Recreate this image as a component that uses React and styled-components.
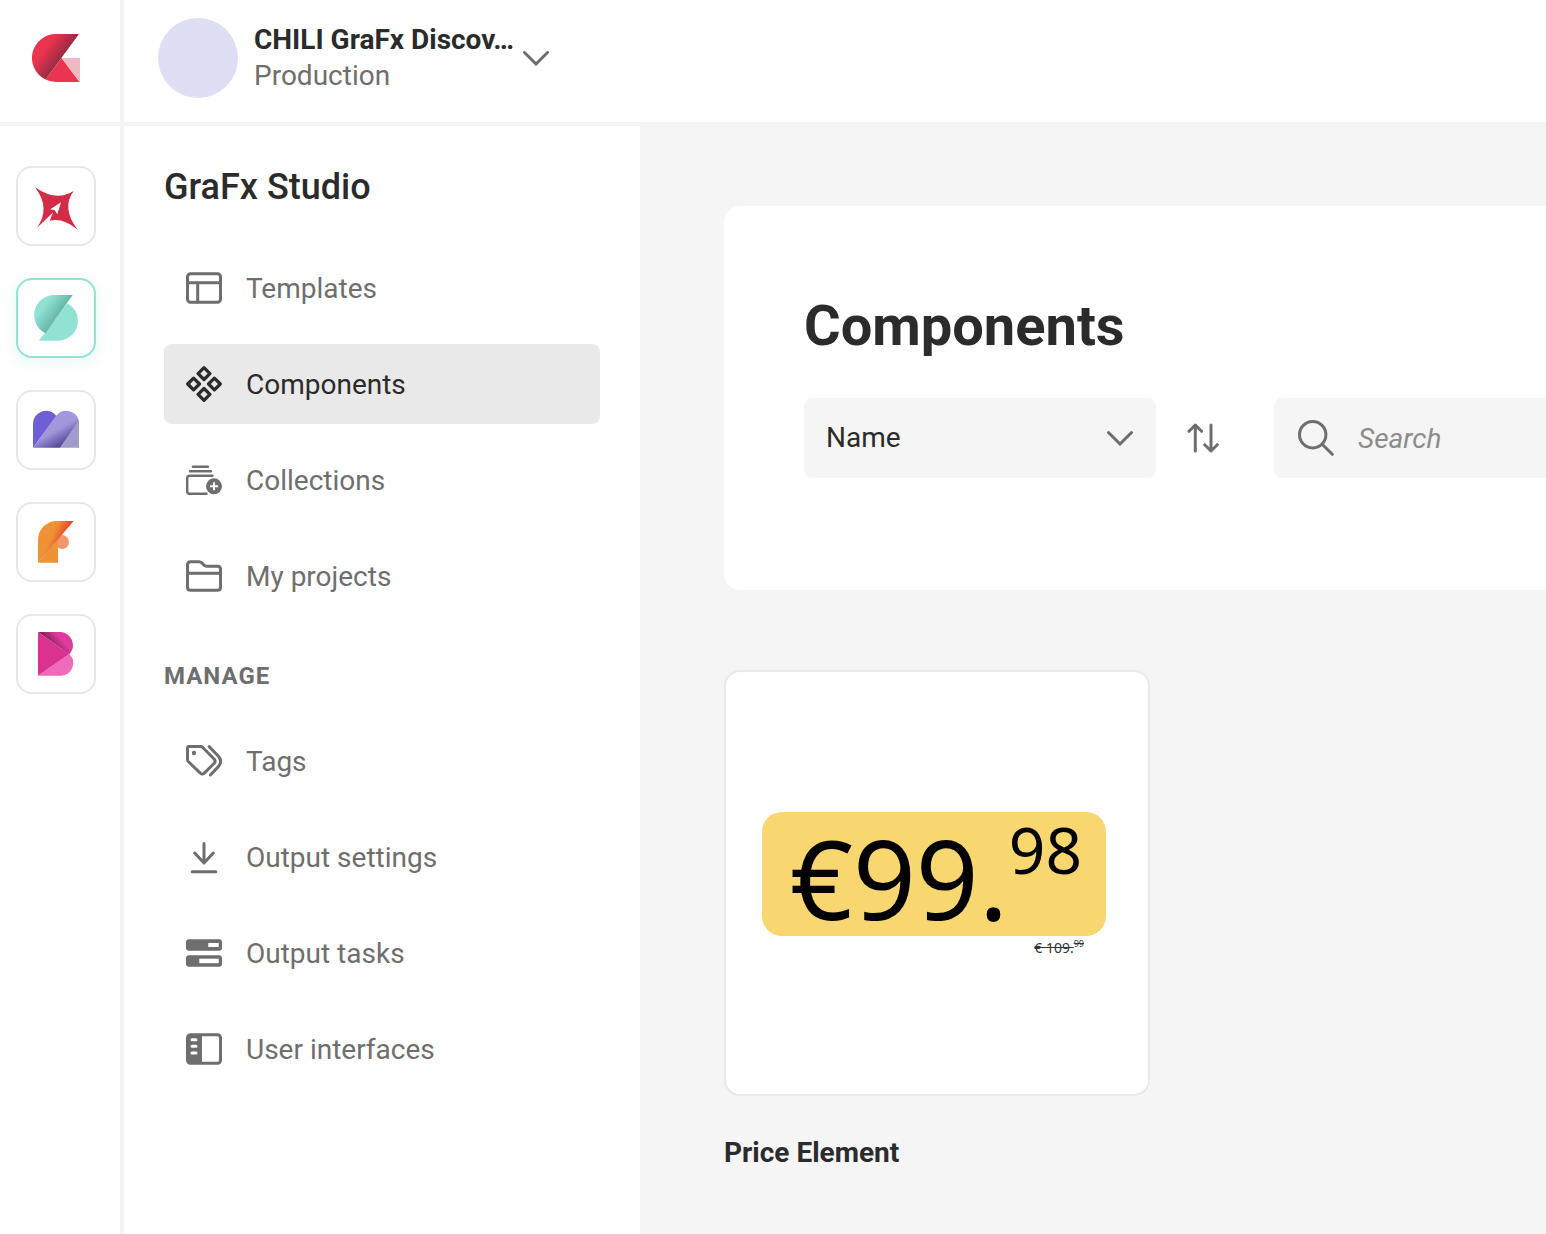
import React, { useState } from 'react';
import styled, { createGlobalStyle } from 'styled-components';

const GlobalStyle = createGlobalStyle`
  * {
    box-sizing: border-box;
  }

  body {
    margin: 0;
    background: #fff;
    color: #2b2b2b;
    font-family: Roboto, sans-serif;
    font-size: 28px;
    line-height: 36px;
    overflow-x: hidden;
  }

  button, input, select {
    font: inherit;
    color: inherit;
  }
`;

// Page frame
const Page = styled.div`
  display: grid;
  grid-template-columns: 124px minmax(0, 1fr);
  grid-template-rows: 126px 1fr;
  min-height: 100vh;
`;

const LogoCell = styled.a`
  display: flex;
  align-items: flex-start;
  padding: 34px 32px 0;
  border-right: 4px solid #f4f4f4;
  border-bottom: 4px solid #f4f4f4;
`;

const Header = styled.header`
  display: flex;
  align-items: flex-start;
  padding: 18px 34px;
  border-bottom: 4px solid #f4f4f4;
`;

const Rail = styled.nav`
  display: flex;
  flex-direction: column;
  gap: 32px;
  padding: 40px 16px;
  border-right: 4px solid #f4f4f4;
`;

const Body = styled.div`
  display: grid;
  grid-template-columns: 516px minmax(0, 1fr);
`;

// Header
const AccountButton = styled.button`
  display: flex;
  align-items: center;
  padding: 0;
  border: none;
  background: none;
  text-align: left;
  cursor: pointer;
`;

const Avatar = styled.span`
  width: 80px;
  height: 80px;
  margin-right: 16px;
  border-radius: 50%;
  background: #dedef5;
`;

const AccountText = styled.span`
  display: flex;
  flex-direction: column;
  margin-right: 9px;
`;

const AccountName = styled.span`
  font-weight: 700;
`;

const AccountType = styled.span`
  color: #6e6e6e;
`;

// Rail
const AppButton = styled.button`
  display: flex;
  align-items: center;
  justify-content: center;
  width: 80px;
  height: 80px;
  padding: 0;
  border: 2px solid ${(props) => (props.$active ? '#92e2d3' : '#e7e7e7')};
  border-radius: 16px;
  background: #fff;
  box-shadow: ${(props) => (props.$active ? '0 4px 16px rgba(146, 226, 211, 0.25)' : 'none')};
  cursor: pointer;
`;

// Side menu
const Sidebar = styled.aside`
  padding: 40px;
`;

const SidebarTitle = styled.h2`
  margin: 0 0 40px;
  font-size: 36px;
  font-weight: 500;
  line-height: 42px;
`;

const GroupTitle = styled.h3`
  margin: 40px 0 25px;
  color: #6e6e6e;
  font-size: 24px;
  font-weight: 700;
  line-height: 40px;
  letter-spacing: 1px;
`;

const MenuList = styled.ul`
  display: flex;
  flex-direction: column;
  gap: 16px;
  margin: 0;
  padding: 0;
  list-style: none;
`;

const MenuLink = styled.a`
  display: flex;
  align-items: center;
  gap: 24px;
  height: 80px;
  padding: 0 22px;
  border-radius: 8px;
  background: ${(props) => (props.$active ? '#e9e9e9' : 'transparent')};
  color: ${(props) => (props.$active ? '#2b2b2b' : '#6e6e6e')};
  text-decoration: none;
`;

const MenuLabel = styled.span`
  padding-top: 2px;
`;

// Content
const Main = styled.main`
  padding: 80px 0 60px 84px;
  background: #f5f5f5;
`;

const Panel = styled.section`
  padding: 80px 0 112px 80px;
  border-radius: 16px 0 0 16px;
  background: #fff;
`;

const PanelTitle = styled.h1`
  margin: 0 0 32px;
  font-size: 56px;
  font-weight: 700;
  line-height: 80px;
`;

const Toolbar = styled.div`
  display: flex;
  align-items: center;
`;

const SelectBox = styled.div`
  position: relative;
  width: 352px;

  svg {
    position: absolute;
    top: 32px;
    right: 23px;
    pointer-events: none;
  }
`;

const Select = styled.select`
  display: block;
  width: 100%;
  height: 80px;
  padding: 0 22px;
  border: none;
  border-radius: 8px;
  background: #f5f5f5;
  appearance: none;
`;

const SortButton = styled.button`
  display: flex;
  align-items: center;
  justify-content: center;
  width: 94px;
  height: 80px;
  margin-right: 24px;
  padding: 0;
  border: none;
  background: none;
  cursor: pointer;
`;

const SearchBox = styled.label`
  display: flex;
  flex: 1;
  align-items: center;
  gap: 24px;
  min-width: 0;
  height: 80px;
  padding-left: 24px;
  border-radius: 8px 0 0 8px;
  background: #f5f5f5;
`;

const SearchInput = styled.input`
  flex: 1;
  min-width: 0;
  padding: 2px 0 0;
  border: none;
  outline: none;
  background: none;

  &::placeholder {
    color: #8c8c8c;
    font-style: italic;
    opacity: 1;
  }
`;

const Cards = styled.div`
  display: flex;
  flex-wrap: wrap;
  gap: 40px;
  margin-top: 80px;
`;

const Card = styled.article`
  width: 426px;
`;

const Thumbnail = styled.div`
  display: flex;
  flex-direction: column;
  justify-content: center;
  height: 426px;
  padding: 6px 42px 0 36px;
  border: 2px solid #e9e9e9;
  border-radius: 16px;
  background: #fff;
  color: #000;
  font-family: 'Noto Sans', sans-serif;
`;

const CardTitle = styled.h4`
  margin: 39px 0 0;
  font-size: 28px;
  font-weight: 700;
  line-height: 36px;
`;

const PriceTag = styled.div`
  display: flex;
  justify-content: space-between;
  height: 124px;
  padding: 0 24px 0 28px;
  border-radius: 20px;
  background: #f8d770;
`;

const PriceWhole = styled.span`
  font-size: 110px;
  line-height: 130px;
`;

const PriceCents = styled.span`
  font-size: 64px;
  line-height: 76px;
`;

const OldPrice = styled.del`
  display: flex;
  justify-content: flex-end;
  padding-right: 22px;
  color: #333;
  font-size: 14px;
  line-height: 24px;
`;

const OldCents = styled.span`
  font-size: 9px;
  line-height: 16px;
`;

const Icon = ({ children, size = 36 }) => (
  <svg
    width={size}
    height={size}
    viewBox={`0 0 ${size} ${size}`}
    fill="none"
    stroke="currentColor"
    strokeWidth="3"
    strokeLinecap="round"
    strokeLinejoin="round"
    aria-hidden="true"
  >
    {children}
  </svg>
);

const Chevron = () => (
  <svg width="26" height="16" viewBox="0 0 26 16" fill="none" stroke="#6e6e6e" strokeWidth="3" strokeLinecap="round" aria-hidden="true">
    <path d="M1.5 2.5 13 14 24.5 2.5" />
  </svg>
);

const Logo = () => (
  <svg width="48" height="48" viewBox="0 0 48 48" aria-hidden="true">
    <defs>
      <linearGradient id="logo" gradientUnits="userSpaceOnUse" x1="14" y1="14" x2="32" y2="27.3">
        <stop offset="0" stopColor="#eb344f" />
        <stop offset="1" stopColor="#86283f" />
      </linearGradient>
    </defs>
    <path d="M29.4 24H48V48Z" fill="#f0b8c3" />
    <path d="M29.4 24 47.5 48H24A24 24 0 0 1 13.5 45.6Z" fill="#eb344f" />
    <path d="M24 0H47L13.5 45.6A24 24 0 0 1 24 0Z" fill="url(#logo)" />
  </svg>
);

const apps = [
  {
    name: 'Publisher',
    art: (
      <>
        <path d="M3 5.3Q24 20 41.7 9Q29 26 45.7 47.7Q31 35.5 17.7 38.7L21 30.5L5 45.7Q19 26 3 5.3Z" fill="#d42c46" />
        <path d="M29 20.3 18.3 27.3 22.8 28.2 25.3 32.2Z" fill="#fff" />
      </>
    ),
  },
  {
    name: 'Studio',
    art: (
      <>
        <defs>
          <linearGradient id="studio" gradientUnits="userSpaceOnUse" x1="12" y1="11" x2="29" y2="23.5">
            <stop offset="0" stopColor="#92e2d3" />
            <stop offset="1" stopColor="#5cb09f" />
          </linearGradient>
        </defs>
        <path d="M7 46.7 35.3 9.3A20.2 20.2 0 0 1 46 27A20 20 0 0 1 26.5 46.7Z" fill="#92e2d3" />
        <path d="M40.7 1H22.5A20.2 20.2 0 0 0 13.4 39.3Z" fill="url(#studio)" />
      </>
    ),
  },
  {
    name: 'Media',
    art: (
      <>
        <defs>
          <linearGradient id="media" gradientUnits="userSpaceOnUse" x1="22" y1="25" x2="31" y2="41">
            <stop offset="0" stopColor="#a397dc" />
            <stop offset="1" stopColor="#463d8c" />
          </linearGradient>
        </defs>
        <path d="M1 41.7V18A13 13 0 0 1 24.4 10Z" fill="#6f5fd6" />
        <path d="M28 41.7 47 15V41.7Z" fill="#a19bcc" />
        <path d="M1 41.7 24 9.9A13 13 0 0 1 47 15L28 41.7Z" fill="url(#media)" />
      </>
    ),
  },
  {
    name: 'Fulfillment',
    art: (
      <>
        <defs>
          <linearGradient id="fulfil" gradientUnits="userSpaceOnUse" x1="22" y1="13" x2="35" y2="19">
            <stop offset="0" stopColor="#ef9135" />
            <stop offset="1" stopColor="#e63b28" />
          </linearGradient>
        </defs>
        <circle cx="30" cy="24" r="7" fill="#f2976b" />
        <path d="M6 44.7 26 21V44.7Z" fill="#ef9135" />
        <path d="M41.7 3H24.5A18.5 18.5 0 0 0 6 21.5V44.7Z" fill="url(#fulfil)" />
      </>
    ),
  },
  {
    name: 'Brand',
    art: (
      <>
        <defs>
          <linearGradient id="brand" gradientUnits="userSpaceOnUse" x1="17" y1="12" x2="25.5" y2="5">
            <stop offset="0" stopColor="#86205f" />
            <stop offset="1" stopColor="#de3b9c" />
          </linearGradient>
        </defs>
        <path d="M6 2H28.6A13.2 13.2 0 0 1 37.3 24.2Z" fill="url(#brand)" />
        <path d="M6 45.7 37.3 24A12.6 12.6 0 0 1 29.2 45.7Z" fill="#ee6bb9" />
        <path d="M6 2 37.3 24 6 45.7Z" fill="#d9338f" />
      </>
    ),
  },
];

const icons = {
  templates: (
    <Icon>
      <rect x="1.5" y="3.7" width="33" height="28.6" rx="3" />
      <path d="M2 12.7H34M11.7 13V32" />
    </Icon>
  ),
  components: (
    <Icon>
      <g strokeWidth="3.2">
        <path d="M18 1.7 23.9 7.6 18 13.5 12.1 7.6Z" />
        <path d="M18 22.5 23.9 28.4 18 34.3 12.1 28.4Z" />
        <path d="M7.6 12.1 13.5 18 7.6 23.9 1.7 18Z" />
        <path d="M28.4 12.1 34.3 18 28.4 23.9 22.5 18Z" />
      </g>
    </Icon>
  ),
  collections: (
    <Icon>
      <g strokeWidth="2.4">
        <path d="M7 4.7H22M4 9.3H25M26.5 13.8H3.5Q1.2 13.8 1.2 16V29.5Q1.2 31.8 3.5 31.8H20.5" />
      </g>
      <circle cx="28" cy="24.3" r="8" fill="currentColor" stroke="none" />
      <path d="M28 20.3V28.3M24 24.3H32" stroke="#fff" strokeWidth="2" strokeLinecap="butt" />
    </Icon>
  ),
  projects: (
    <Icon>
      <path d="M4.5 3.8H13.2Q14.7 3.8 15.8 4.9L18 7.1Q19 8.2 20.5 8.2H31.5Q34.5 8.2 34.5 11.2V29.3Q34.5 32.3 31.5 32.3H4.5Q1.5 32.3 1.5 29.3V6.8Q1.5 3.8 4.5 3.8ZM2 15.2H34" />
    </Icon>
  ),
  tags: (
    <Icon>
      <path d="M3 3.5H14.5Q15.8 3.5 16.8 4.5L28.3 16.3Q30 18.3 28.3 20.2L18 30.4Q16.3 31.8 14.6 30.4L2.7 19Q1.5 17.8 1.5 16.5V5Q1.5 3.5 3 3.5Z" />
      <path d="M23.2 3.6 32.4 13.2Q36.8 18.3 32.4 23.6L24.4 32" />
      <circle cx="8" cy="10" r="2.2" fill="currentColor" stroke="none" />
    </Icon>
  ),
  download: (
    <Icon>
      <path d="M18 4.5V24M8.7 14 18 24 27.3 14M6.2 32.7H29.8" />
    </Icon>
  ),
  tasks: (
    <Icon>
      <rect x="0" y="4.3" width="36" height="11.5" rx="3" fill="currentColor" stroke="none" />
      <rect x="0" y="20.2" width="36" height="11.5" rx="3" fill="currentColor" stroke="none" />
      <rect x="22.3" y="8" width="10.4" height="4" fill="#fff" stroke="none" />
      <rect x="13.3" y="23.7" width="19.4" height="4.5" fill="#fff" stroke="none" />
    </Icon>
  ),
  interfaces: (
    <Icon>
      <rect x="1.5" y="3.7" width="33" height="28.6" rx="3" />
      <path d="M2 4.5H16V31.5H2Z" fill="currentColor" stroke="none" />
      <path d="M6 8.7H10M6 15.3H10M6 22H10" stroke="#fff" />
    </Icon>
  ),
};

const studioLinks = [
  { label: 'Templates', icon: icons.templates },
  { label: 'Components', icon: icons.components },
  { label: 'Collections', icon: icons.collections },
  { label: 'My projects', icon: icons.projects },
];

const manageLinks = [
  { label: 'Tags', icon: icons.tags },
  { label: 'Output settings', icon: icons.download },
  { label: 'Output tasks', icon: icons.tasks },
  { label: 'User interfaces', icon: icons.interfaces },
];

function Menu({ links, current }) {
  return (
    <MenuList>
      {links.map((link) => (
        <li key={link.label}>
          <MenuLink href="#" $active={link.label === current}>
            {link.icon}
            <MenuLabel>{link.label}</MenuLabel>
          </MenuLink>
        </li>
      ))}
    </MenuList>
  );
}

function App() {
  const [search, setSearch] = useState('');

  return (
    <>
      <GlobalStyle />
      <Page>
        <LogoCell href="#" aria-label="Home">
          <Logo />
        </LogoCell>
        <Header>
          <AccountButton>
            <Avatar />
            <AccountText>
              <AccountName>CHILI GraFx Discov…</AccountName>
              <AccountType>Production</AccountType>
            </AccountText>
            <Chevron />
          </AccountButton>
        </Header>
        <Rail>
          {apps.map((app) => (
            <AppButton key={app.name} aria-label={app.name} $active={app.name === 'Studio'}>
              <svg width="48" height="48" viewBox="0 0 48 48" aria-hidden="true">{app.art}</svg>
            </AppButton>
          ))}
        </Rail>
        <Body>
          <Sidebar>
            <SidebarTitle>GraFx Studio</SidebarTitle>
            <Menu links={studioLinks} current="Components" />
            <GroupTitle>MANAGE</GroupTitle>
            <Menu links={manageLinks} />
          </Sidebar>
          <Main>
            <Panel>
              <PanelTitle>Components</PanelTitle>
              <Toolbar>
                <SelectBox>
                  <Select aria-label="Sort by" defaultValue="Name">
                    <option>Name</option>
                  </Select>
                  <Chevron />
                </SelectBox>
                <SortButton aria-label="Sort direction">
                  <svg width="32" height="30" viewBox="0 0 32 30" fill="none" stroke="#6e6e6e" strokeWidth="3" strokeLinecap="round" strokeLinejoin="round" aria-hidden="true">
                    <path d="M8.3 28V2.5M2 8.3 8.3 2 14.6 8.3M24 2V27.5M17.7 21.7 24 28 30.3 21.7" />
                  </svg>
                </SortButton>
                <SearchBox>
                  <svg width="36" height="36" viewBox="0 0 36 36" fill="none" stroke="#6e6e6e" strokeWidth="3" strokeLinecap="round" aria-hidden="true">
                    <circle cx="14.7" cy="14.7" r="13.2" />
                    <path d="M24.2 24.2 34.3 34.3" />
                  </svg>
                  <SearchInput
                    type="text"
                    aria-label="Search"
                    placeholder="Search"
                    value={search}
                    onChange={(event) => setSearch(event.target.value)}
                  />
                </SearchBox>
              </Toolbar>
            </Panel>
            <Cards>
              <Card>
                <Thumbnail>
                  <PriceTag>
                    <PriceWhole>€99.</PriceWhole>
                    <PriceCents>98</PriceCents>
                  </PriceTag>
                  <OldPrice>
                    € 109.<OldCents>99</OldCents>
                  </OldPrice>
                </Thumbnail>
                <CardTitle>Price Element</CardTitle>
              </Card>
            </Cards>
          </Main>
        </Body>
      </Page>
    </>
  );
}

export default App;
